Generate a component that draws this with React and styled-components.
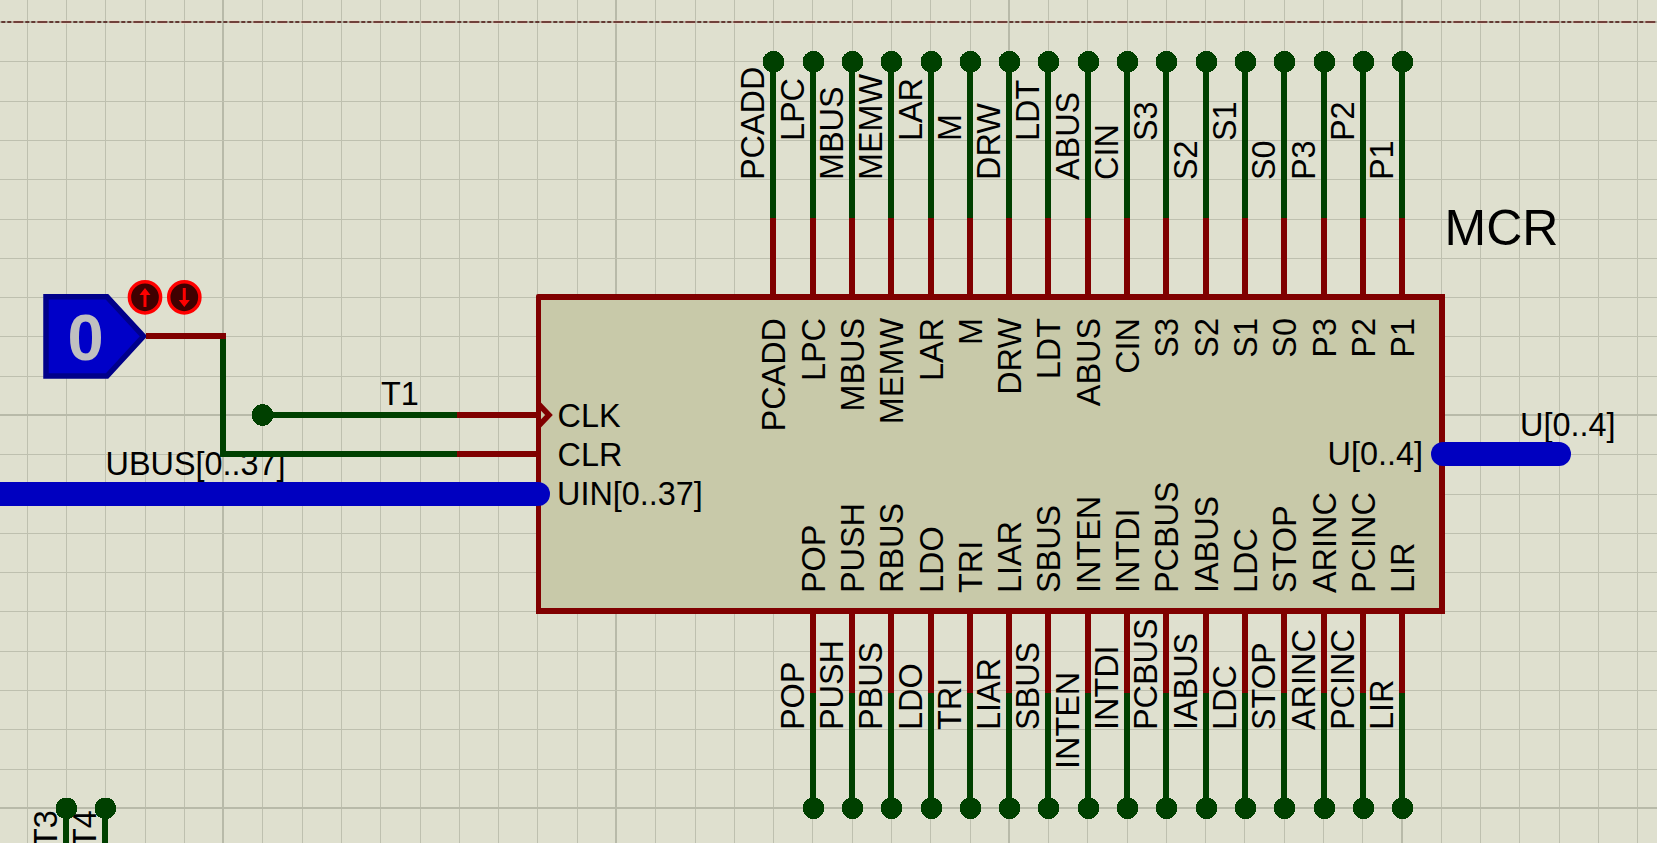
import React from 'react';
import styled, { createGlobalStyle } from 'styled-components';

const INK = '#000000';
const RED = '#800000';
const GREEN = '#004000';
const BLUE = '#0000c0';
const LABEL_BASELINE = 0.8465;
const PIN_SIZE = 32.4;

const Global = createGlobalStyle`
  html, body { margin: 0; padding: 0; background: #dfe0cf; }
  #root { width: 100%; }
`;

const Sheet = styled.main`
  position: relative;
  width: 1657px;
  height: 843px;
  overflow: hidden;
  background: #dfe0cf;
  font-family: "Liberation Sans", Arial, sans-serif;
  color: ${INK};
`;

const Layer = styled.svg`
  position: absolute;
  left: 0;
  top: 0;
  width: 1657px;
  height: 843px;
  display: block;
`;

const GridBar = styled.rect`
  fill: ${(p) => (p.$major ? '#b8baa9' : '#bec0af')};
`;

const BorderDash = styled.line`
  stroke: #47100c;
  stroke-width: 1.4;
  stroke-dasharray: 10 2 4 2 4 2;
`;

const BorderGlow = styled.line`
  stroke: #f2d6c8;
  stroke-width: 3;
  stroke-dasharray: 10 14;
`;

const ChipBody = styled.div`
  position: absolute;
  left: 536px;
  top: 294px;
  width: 909px;
  height: 320px;
  box-sizing: border-box;
  background: #c8c9a9;
  border: 6px solid ${RED};
  border-left-width: 5px;
  border-radius: 2px 0 0 0;
`;

const Caption = styled.span.attrs((p) => ({
  style: { left: p.$x, top: p.$baseline - LABEL_BASELINE * (p.$size || PIN_SIZE) },
}))`
  position: absolute;
  font-size: ${(p) => p.$size || PIN_SIZE}px;
  font-weight: ${(p) => (p.$bold ? 700 : 400)};
  color: ${(p) => p.$color || INK};
  line-height: 1;
  white-space: nowrap;
  transform: ${(p) => (p.$end ? 'translateX(-100%)' : 'none')};
`;

const PinLabel = styled.span.attrs((p) => ({
  style: { left: p.$baseline - LABEL_BASELINE * PIN_SIZE, top: p.$y },
}))`
  position: absolute;
  font-size: ${PIN_SIZE}px;
  line-height: 1;
  white-space: nowrap;
  transform-origin: 0 0;
  transform: rotate(-90deg) ${(p) => (p.$end ? 'translateX(-100%)' : '')};
`;

const Wire = styled.line`
  stroke: ${(p) => (p.$net === 'green' ? GREEN : RED)};
  stroke-width: 6;
`;

const Bus = styled.line`
  stroke: ${BLUE};
  stroke-width: 24;
  stroke-linecap: round;
`;

const Terminal = styled.circle`
  fill: ${GREEN};
  shape-rendering: crispEdges;
`;

const Chevron = styled.polyline`
  fill: none;
  stroke: ${RED};
  stroke-width: 5.5;
`;

const GeneratorBody = styled.polygon`
  fill: #0000c8;
  stroke: #00008a;
  stroke-width: 5.5;
  stroke-linejoin: miter;
  stroke-miterlimit: 4;
`;

const ProbeDisc = styled.circle`
  fill: #400000;
  stroke: #ff0000;
  stroke-width: 3.5;
`;

const ProbeArrow = styled.polygon`
  fill: #ff0000;
`;

const TOP_X = [773, 813, 852, 891, 931, 970, 1009, 1048, 1088, 1127, 1166, 1206, 1245, 1284, 1324, 1363, 1402];
const BOTTOM_X = TOP_X.slice(1);

const TOP_PINS = [
  ['PCADD', 1], ['LPC', 0], ['MBUS', 1], ['MEMW', 1], ['LAR', 0], ['M', 0], ['DRW', 1], ['LDT', 0], ['ABUS', 1],
  ['CIN', 1], ['S3', 0], ['S2', 1], ['S1', 0], ['S0', 1], ['P3', 1], ['P2', 0], ['P1', 1],
];
const BOTTOM_OUTER = [
  ['POP', 0], ['PUSH', 0], ['PBUS', 0], ['LDO', 0], ['TRI', 0], ['LIAR', 0], ['SBUS', 0], ['INTEN', 1],
  ['INTDI', 0], ['PCBUS', 0], ['IABUS', 0], ['LDC', 0], ['STOP', 0], ['ARINC', 0], ['PCINC', 0], ['LIR', 0],
];
const BOTTOM_INNER = [
  'POP', 'PUSH', 'RBUS', 'LDO', 'TRI', 'LIAR', 'SBUS', 'INTEN', 'INTDI', 'PCBUS', 'IABUS', 'LDC', 'STOP', 'ARINC',
  'PCINC', 'LIR',
];

const gridColumns = Array.from({ length: 42 }, (_, k) => ({ pos: Math.floor(27.3 + 39.28 * k), major: k % 10 === 5 }));
const gridRows = Array.from({ length: 22 }, (_, j) => ({ pos: Math.floor(22.68 + 39.28 * j), major: j % 10 === 0 }));

function Grid() {
  return (
    <Layer shapeRendering="crispEdges">
      {gridColumns.map(({ pos, major }) => (
        <GridBar key={pos} $major={major} x={major ? pos - 1 : pos} y={0} width={major ? 2 : 1} height={843} />
      ))}
      {gridRows.map(({ pos, major }) => (
        <GridBar key={pos} $major={major} x={0} y={major ? pos - 1 : pos} width={1657} height={major ? 2 : 1} />
      ))}
    </Layer>
  );
}

function Wires() {
  return (
    <Layer>
      <BorderGlow x1={13} y1={22} x2={1657} y2={22} />
      <BorderDash x1={-10.7} y1={22} x2={1657} y2={22} />

      {TOP_X.map((x) => (
        <g key={x}>
          <Wire $net="green" x1={x} y1={62} x2={x} y2={218} />
          <Wire x1={x} y1={218} x2={x} y2={296} />
          <Terminal cx={x + 0.5} cy={61.7} r={10.8} />
        </g>
      ))}
      {BOTTOM_X.map((x) => (
        <g key={x}>
          <Wire x1={x} y1={612} x2={x} y2={693} />
          <Wire $net="green" x1={x} y1={693} x2={x} y2={808} />
          <Terminal cx={x + 0.5} cy={808.3} r={10.8} />
        </g>
      ))}

      <GeneratorBody points="46,296.8 107,296.8 143.5,336.3 107,376 46,376" />
      <Wire x1={146} y1={336} x2={226} y2={336} />
      <Wire $net="green" x1={223} y1={339} x2={223} y2={457} />
      <Wire $net="green" x1={220} y1={454} x2={457} y2={454} />
      <Wire x1={457} y1={454} x2={538} y2={454} />
      <Wire $net="green" x1={262} y1={415} x2={457} y2={415} />
      <Wire x1={457} y1={415} x2={538} y2={415} />
      <Terminal cx={262.5} cy={415} r={10.8} />
      <Chevron points="538,403.5 549,415 538,426.5" />

      <Bus x1={-30} y1={494} x2={538} y2={494} />
      <Bus x1={1443} y1={454} x2={1559} y2={454} />

      <ProbeDisc cx={145} cy={297.3} r={15.6} />
      <ProbeArrow points="145,288 150.5,295 146.5,295 146.5,307 143.5,307 143.5,295 139.5,295" />
      <ProbeDisc cx={184.3} cy={297.3} r={15.6} />
      <ProbeArrow points="184.3,307 178.8,300 182.8,300 182.8,288 185.8,288 185.8,300 189.8,300" />

      <Terminal cx={66.3} cy={808.3} r={10.8} />
      <Terminal cx={105.3} cy={808.3} r={10.8} />
      <Wire $net="green" x1={66} y1={808} x2={66} y2={843} />
      <Wire $net="green" x1={105} y1={808} x2={105} y2={843} />
    </Layer>
  );
}

export default function App() {
  return (
    <Sheet>
      <Global />
      <Grid />
      <ChipBody />

      {TOP_PINS.map(([name, long], i) => (
        <React.Fragment key={name}>
          <PinLabel $baseline={TOP_X[i] - 9} $y={long ? 180 : 141}>{name}</PinLabel>
          <PinLabel $baseline={TOP_X[i] + 12.7} $y={318} $end>{name}</PinLabel>
        </React.Fragment>
      ))}
      {BOTTOM_OUTER.map(([name, long], i) => (
        <PinLabel key={name} $baseline={BOTTOM_X[i] - 9} $y={long ? 769 : 729.5}>{name}</PinLabel>
      ))}
      {BOTTOM_INNER.map((name, i) => (
        <PinLabel key={name} $baseline={BOTTOM_X[i] + 12.7} $y={593}>{name}</PinLabel>
      ))}
      <PinLabel $baseline={57} $y={848}>T3</PinLabel>
      <PinLabel $baseline={96} $y={848}>T4</PinLabel>

      <Caption $x={557.5} $baseline={427.5}>CLK</Caption>
      <Caption $x={557.5} $baseline={466}>CLR</Caption>
      <Caption $x={557} $baseline={505.5}>UIN[0..37]</Caption>
      <Caption $x={1423} $baseline={465} $end>U[0..4]</Caption>
      <Caption $x={1520} $baseline={436}>U[0..4]</Caption>
      <Caption $x={381} $baseline={405}>T1</Caption>
      <Caption $x={105.5} $baseline={475}>UBUS[0..37]</Caption>
      <Caption $x={1444.5} $baseline={245} $size={50}>MCR</Caption>

      <Wires />

      <Caption $x={67.5} $baseline={360.3} $size={65} $bold $color="#c0c0c0">0</Caption>
    </Sheet>
  );
}
